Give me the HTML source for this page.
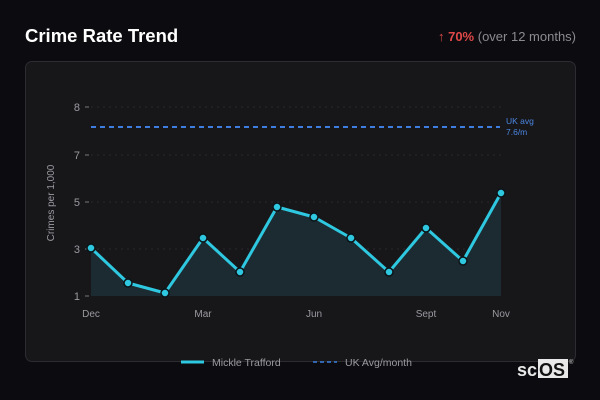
<!DOCTYPE html>
<html><head><style>
body{margin:0;width:600px;height:400px;background:#0c0c10;font-family:"Liberation Sans","DejaVu Sans",sans-serif;overflow:hidden;position:relative}
.t{position:absolute;left:25px;top:25px;color:#fff;font:bold 18.5px "Liberation Sans",sans-serif}
.r{position:absolute;right:24px;top:29px;font-size:13px;color:#8a8a90}
.r b{color:#e04848}
.card{position:absolute;left:25px;top:61px;width:549px;height:299px;background:#17171a;border:1px solid #2c2c31;border-radius:7px}
svg{position:absolute;left:0;top:0}
</style></head><body>
<div class="t">Crime Rate Trend</div>
<div class="r"><b>↑ 70%</b> (over 12 months)</div>
<div class="card"></div>
<svg width="600" height="400" font-family="Liberation Sans, sans-serif">
<g stroke="#2a2a2e" stroke-dasharray="2 4">
<line x1="91" y1="107" x2="501" y2="107"/><line x1="91" y1="155" x2="501" y2="155"/><line x1="91" y1="202" x2="501" y2="202"/><line x1="91" y1="249" x2="501" y2="249"/>
</g>
<g fill="#9a9aa0" font-size="11" text-anchor="end">
<text x="80" y="111">8</text><text x="80" y="159">7</text><text x="80" y="206">5</text><text x="80" y="253">3</text><text x="80" y="300">1</text>
</g>
<g stroke="#777" ><line x1="85" y1="107" x2="89" y2="107"/><line x1="85" y1="155" x2="89" y2="155"/><line x1="85" y1="202" x2="89" y2="202"/><line x1="85" y1="249" x2="89" y2="249"/><line x1="85" y1="296" x2="89" y2="296"/></g>
<text transform="translate(54,203) rotate(-90)" fill="#9a9aa0" font-size="10" text-anchor="middle">Crimes per 1,000</text>
<g fill="#9a9aa0" font-size="10" text-anchor="middle">
<text x="91" y="317">Dec</text><text x="203" y="317">Mar</text><text x="314" y="317">Jun</text><text x="426" y="317">Sept</text><text x="501" y="317">Nov</text>
</g>
<line x1="91" y1="127" x2="500" y2="127" stroke="#3d7ee0" stroke-width="2" stroke-dasharray="5 4"/>
<text x="506" y="124" fill="#4a86e0" font-size="8.5">UK avg</text><text x="506" y="135" fill="#4a86e0" font-size="8.5">7.6/m</text>
<polygon points="91,248 128,283 165,293 203,238 240,272 277,207 314,217 351,238 389,272 426,228 463,261 501,193 501,296 91,296" fill="#1b2b31"/>
<polyline points="91,248 128,283 165,293 203,238 240,272 277,207 314,217 351,238 389,272 426,228 463,261 501,193" fill="none" stroke="#2ec8e0" stroke-width="3" stroke-linejoin="round"/>
<g fill="#2ec8e0" stroke="#0c1418" stroke-width="1.5">
<circle cx="91" cy="248" r="4"/><circle cx="128" cy="283" r="4"/><circle cx="165" cy="293" r="4"/><circle cx="203" cy="238" r="4"/><circle cx="240" cy="272" r="4"/><circle cx="277" cy="207" r="4"/><circle cx="314" cy="217" r="4"/><circle cx="351" cy="238" r="4"/><circle cx="389" cy="272" r="4"/><circle cx="426" cy="228" r="4"/><circle cx="463" cy="261" r="4"/><circle cx="501" cy="193" r="4"/>
</g>
<line x1="181" y1="362" x2="204" y2="362" stroke="#2ec8e0" stroke-width="3"/>
<text x="212" y="366" fill="#9a9aa0" font-size="10.5">Mickle Trafford</text>
<line x1="313" y1="362" x2="337" y2="362" stroke="#3d7ee0" stroke-width="1.5" stroke-dasharray="4 3"/>
<text x="345" y="366" fill="#9a9aa0" font-size="10.5">UK Avg/month</text>
<rect x="538" y="359" width="30" height="19" fill="#e8e8e8"/>
<text x="517" y="376" fill="#e8e8e8" font-size="18" font-weight="bold">sc</text>
<text x="539" y="376" fill="#111" font-size="18" font-weight="bold">OS</text>
<text x="569" y="364" fill="#ccc" font-size="6">®</text>
</svg>
</body></html>
